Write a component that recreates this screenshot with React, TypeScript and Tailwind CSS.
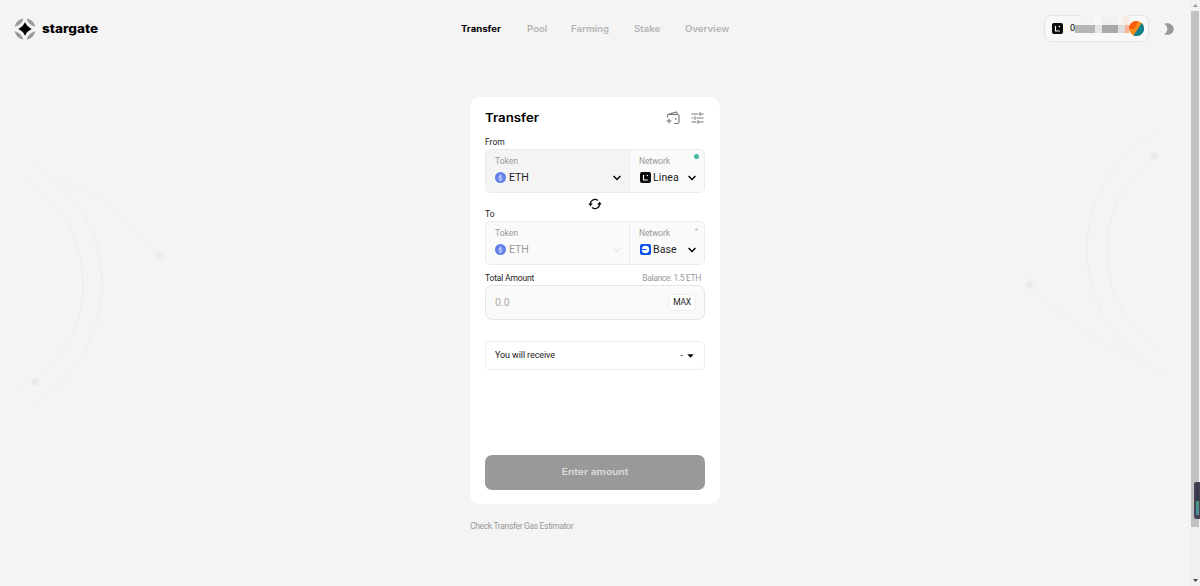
import React from 'react';
import { clsx } from 'clsx';

const links = [
  { label: 'Transfer', style: 'w-[41px] text-black font-bold' },
  { label: 'Pool', style: 'w-[19px] text-[#b3b3b3] font-semibold' },
  { label: 'Farming', style: 'w-[38px] text-[#b3b3b3] font-semibold' },
  { label: 'Stake', style: 'w-[26px] text-[#b3b3b3] font-semibold' },
  { label: 'Overview', style: 'w-[43px] text-[#b3b3b3] font-semibold' },
];

function Logo() {
  return (
    <svg className="h-[22px] w-[22px]" viewBox="0 0 22 22">
      <g fill="#999">
        <path d="M.7 8.800C1.600 4.400 4.800 1.300 9.300.5 8.300 4.800 5 7.400.7 8.800Z" />
        <path d="M21.300 8.800C20.400 4.400 17.200 1.300 12.700.5c1 4.300 4.300 6.900 8.600 8.300Z" />
        <path d="M.7 13.200c.9 4.400 4.100 7.500 8.600 8.300-1-4.300-4.300-6.900-8.600-8.300Z" />
        <path d="M21.300 13.200c-.9 4.400-4.100 7.500-8.600 8.300 1-4.300 4.300-6.900 8.600-8.300Z" />
      </g>
      <path d="M11 5.500c1.200 2.500 3 4.300 5.500 5.500-2.500 1.200-4.300 3-5.500 5.500-1.200-2.500-3-4.300-5.500-5.500 2.500-1.200 4.300-3 5.500-5.500Z" fill="#000" stroke="#000" strokeWidth="1.2" />
    </svg>
  );
}

function LineaIcon({ className }: { className?: string }) {
  return (
    <svg className={clsx('shrink-0', className)} viewBox="0 0 11 11">
      <rect width="11" height="11" rx="2" fill="#0b0b0b" />
      <path d="M3.500 3v5H7.800" fill="none" stroke="#fff" strokeWidth="1.1" />
      <circle cx="7.300" cy="3.500" r=".8" fill="#fff" />
    </svg>
  );
}

function BaseIcon() {
  return (
    <svg className="h-[11px] w-[11px] shrink-0" viewBox="0 0 11 11">
      <rect width="11" height="11" rx="2" fill="#0b52f0" />
      <circle cx="5.500" cy="5.500" r="3.700" fill="#fff" />
      <path d="M1.500 5.500H6.600" stroke="#0b52f0" strokeWidth="1" />
    </svg>
  );
}

function EthIcon() {
  return (
    <svg className="h-[11px] w-[11px] shrink-0" viewBox="0 0 11 11">
      <circle cx="5.500" cy="5.500" r="5.500" fill="#627eea" />
      <path d="M5.500 1.700 3.200 5.600 5.500 7l2.300-1.400Z" fill="#c5d0fa" />
      <path d="M5.500 1.700V7l2.300-1.400Z" fill="#93a6f3" />
      <path d="m3.200 6.200 2.300 3.200 2.300-3.200-2.300 1.300Z" fill="#dbe2ff" />
    </svg>
  );
}

function Chevron({ className }: { className?: string }) {
  return (
    <svg className={clsx('h-[6px] w-[8px] shrink-0', className)} viewBox="0 0 8 6" fill="none" stroke="currentColor">
      <path d="M.6 1.100 4 4.500l3.400-3.400" strokeWidth="1.4" />
    </svg>
  );
}

function WalletIcon() {
  return (
    <svg className="h-[14px] w-[14px]" viewBox="0 0 14 14" fill="none" stroke="#777" strokeWidth="1.1">
      <path d="M1.500 6.500V4.600c0-.7.4-1.100 1-1.100h9c.9 0 1.500.5 1.500 1.400v6.200c0 .8-.6 1.400-1.500 1.400H8" />
      <path d="M2 3.500 9.800 1.100c.7-.2 1.200.1 1.200.8v1.500M.5 10h5M3 7.500v5" />
      <path d="M9.700 7.300v1.400" strokeWidth="1.4" />
    </svg>
  );
}

function SlidersIcon() {
  return (
    <svg className="h-[12px] w-[13px]" viewBox="0 0 13 12" fill="none" stroke="#777" strokeWidth="1.1">
      <path d="M.5 2h7M9 2h3.500M9 .2v3.600M.5 6h2M5.500 6h7M4 4.200v3.600M.5 10h5M7 10h5.500M7 8.200v3.600" />
    </svg>
  );
}

function SwapIcon() {
  return (
    <svg className="h-[12px] w-[14px]" viewBox="0 0 14 12">
      <g fill="none" stroke="#000" strokeWidth="1.3">
        <path d="M2.500 6.500A4.500 4.500 0 0 1 9.800 2.400" />
        <path d="M11.500 5.500A4.500 4.500 0 0 1 4.200 9.600" />
      </g>
      <path d="M.3 5.600h4.500L2.400 8.200ZM13.700 6.400H9.200l2.400-2.600Z" />
    </svg>
  );
}

function Backdrop() {
  return (
    <svg className="pointer-events-none absolute inset-0 h-full w-full" viewBox="0 0 1190 586" fill="none">
      <defs>
        <linearGradient id="fade-left" x1="0" x2="1">
          <stop offset="0" stopColor="#ececec" stopOpacity="0" />
          <stop offset=".7" stopColor="#ececec" />
        </linearGradient>
        <linearGradient id="fade-right" x1="1" x2="0">
          <stop offset="0" stopColor="#ececec" stopOpacity="0" />
          <stop offset=".7" stopColor="#ececec" />
        </linearGradient>
      </defs>
      <g stroke="url(#fade-left)">
        <path d="M16 176C57 193 83 237 83 285s-26 90-83 110" />
        <path d="M28 162C74 184 102 232 102 285s-34 115-102 133" />
        <path d="M30 170C84 180 122 211 159 254" />
      </g>
      <g stroke="url(#fade-right)">
        <path d="M1182 147c-44 8-75 54-75 104s30 98 80 112" />
        <path d="M1180 123c-56 17-93 69-93 128s38 116 103 131" />
        <path d="M1030 285c38 38 88 75 150 92" />
      </g>
      <g fill="#eaeaea">
        <circle cx="159.500" cy="254.500" r="7" fill="#f2f2f2" />
        <circle cx="159.500" cy="254.500" r="3" />
        <circle cx="35" cy="382" r="3.500" />
        <circle cx="1154" cy="156" r="3.700" />
        <circle cx="1029.500" cy="284.500" r="7" fill="#f2f2f2" />
        <circle cx="1029.500" cy="284.500" r="3.500" />
      </g>
    </svg>
  );
}

function Header() {
  return (
    <header className="relative grid h-[57px] grid-cols-[1fr_auto_1fr] items-center pr-[16px] pl-[14px]">
      <div className="flex items-center gap-[6px]">
        <Logo />
        <span className="origin-left scale-x-[1.13] font-['Inter'] text-[12px] font-extrabold text-black">stargate</span>
      </div>

      <nav className="flex gap-[25px] font-['Inter'] text-[8.500px] leading-3">
        {links.map((link) => (
          <a key={link.label} className={clsx('origin-left scale-x-[1.13] whitespace-nowrap', link.style)}>
            {link.label}
          </a>
        ))}
      </nav>

      <div className="flex items-center justify-end gap-[15px]">
        <div className="relative flex h-[27px] w-[105px] items-center rounded-[7px] border border-[#e3e3e3] bg-[#f8f8f8] pr-[4px] pl-[7px]">
          <LineaIcon className="h-[11px] w-[11px]" />
          <span className="ml-[7px] text-[9px] text-black">0</span>
          {/* masked address, runs over the pill's border */}
          <div className="absolute -top-[3px] left-[30px] w-[54px]">
            <div className="ml-[5px] flex h-[4px] bg-[#f5f5f5]" />
            <div className="ml-[5px] flex h-[8px]">
              <div className="w-[15px] bg-[#f3f3f3]" />
              <div className="w-[8px] bg-[#f8f8f8]" />
              <div className="w-[15px] bg-[#efefef]" />
              <div className="w-[7px] bg-[#f5f5f5]" />
              <div className="w-[6px] bg-[#fbe9e2]" />
            </div>
            <div className="flex h-[8px]">
              <div className="w-[20px] bg-[#b5b5b5]" />
              <div className="w-[7px] bg-[#e6e6e6]" />
              <div className="w-[16px] bg-[#a9a9a9]" />
              <div className="w-[7px] bg-[#dedede]" />
              <div className="w-[4px] bg-[#fbb595]" />
            </div>
          </div>
          <svg className="relative ml-auto h-[15px] w-[15px] shrink-0" viewBox="0 0 15 15">
            <circle cx="7.500" cy="7.500" r="7.500" fill="#f68d1c" />
            <path d="M0 7.500A7.500 7.500 0 0 1 7.500 0L9 1 5 8Z" fill="#fa5a0a" />
            <path d="M12.700 2.100A7.500 7.500 0 0 1 4.500 14.400Z" fill="#10818f" />
          </svg>
        </div>
        <svg className="h-[12px] w-[10px]" viewBox="0 0 10 12">
          <path d="M0 .8C5-1.200 9.700 1.600 9.700 6S5 13.200 0 11.200C4.400 9 4.400 3 0 .8Z" fill="#999" />
        </svg>
      </div>
    </header>
  );
}

type AssetRowProps = {
  network: string;
  icon: React.ReactNode;
  disabled?: boolean;
};

function AssetRow({ network, icon, disabled }: AssetRowProps) {
  return (
    <div className="flex h-[44px] overflow-hidden rounded-[5px] border border-[#ececec] bg-[#fafafa]">
      <div className={clsx('w-[144px] border-r border-[#ececec] pt-[6px] pr-[8px] pl-[9px]', !disabled && 'bg-[#f4f4f4]')}>
        <div className="text-[8.500px] leading-[10px] text-[#999]">Token</div>
        <div className={clsx('mt-[5px] flex h-[13px] items-center', disabled ? 'text-[#999]' : 'text-[#222]')}>
          <EthIcon />
          <span className="ml-[3px] flex-1 text-[10.500px] leading-[13px]">ETH</span>
          <Chevron className={disabled ? 'text-[#ececec]' : 'text-black'} />
        </div>
      </div>
      <div className="relative flex-1 pt-[6px] pr-[8px] pl-[9px]">
        <div className="text-[8.500px] leading-[10px] tracking-[-0.1px] text-[#999]">Network</div>
        <div className="mt-[5px] flex h-[13px] items-center pl-[1px] text-[#222]">
          {icon}
          <span className="ml-[2px] flex-1 text-[10.500px] leading-[13px] tracking-[0.1px]">{network}</span>
          <Chevron className="text-black" />
        </div>
        <span
          className={clsx(
            'absolute rounded-full',
            disabled ? 'top-[6px] right-[6px] h-[3px] w-[3px] bg-[#cfcfcf]' : 'top-[4px] right-[5px] h-[5px] w-[5px] bg-[#45b8a5]'
          )}
        />
      </div>
    </div>
  );
}

function TransferCard() {
  return (
    <section className="flex h-[407px] w-[250px] flex-col rounded-[10px] bg-white px-[15px] pt-[8px] pb-[14px]">
      <div className="flex h-[26px] items-center justify-between">
        <h1 className="mt-[2px] origin-left scale-x-[1.15] font-['Inter'] text-[11.500px] font-semibold text-black">
          Transfer
        </h1>
        <div className="flex items-center gap-[11px] pr-[1px]">
          <WalletIcon />
          <SlidersIcon />
        </div>
      </div>

      <div className="flex h-[18px] items-end pb-[2px] text-[8.500px] leading-[10px] text-[#222]">From</div>
      <AssetRow network="Linea" icon={<LineaIcon className="h-[11px] w-[11px]" />} />

      <div className="grid h-[28px] grid-cols-[1fr_auto_1fr]">
        <span className="self-end pb-[2px] text-[8.500px] leading-[10px] text-[#222]">To</span>
        <div className="pt-[5px]">
          <SwapIcon />
        </div>
      </div>
      <AssetRow network="Base" icon={<BaseIcon />} disabled />

      <div className="flex h-[20px] items-end justify-between pr-[4px] pb-[2px] leading-[10px]">
        <span className="text-[8.500px] tracking-[-0.17px] text-[#222]">Total Amount</span>
        <span className="text-[8.500px] tracking-[-0.35px] text-[#999]">Balance: 1.5 ETH</span>
      </div>
      <div className="flex h-[35px] shrink-0 items-center justify-between rounded-[7px] border border-[#e6e6e6] bg-[#fafafa] pr-[8px] pl-[9px]">
        <span className="mt-[1px] text-[10.500px] text-[#aaa]">0.0</span>
        <button className="h-[17px] w-[28px] rounded-[5px] border border-[#eee] bg-white text-[8.500px] leading-none tracking-[-0.3px] text-[#222]">
          MAX
        </button>
      </div>

      <div className="mt-[21px] flex h-[29px] shrink-0 items-center rounded-[5px] border border-[#ededed] pr-[10px] pl-[9px] text-[9px] text-[#222]">
        <span className="flex-1 tracking-[-0.1px]">You will receive</span>
        <span>-</span>
        <svg className="ml-[4px] h-[4px] w-[7px]" viewBox="0 0 7 4">
          <path d="M.3.200h6.400L3.500 3.700Z" />
        </svg>
      </div>

      <button className="mt-auto flex h-[35px] shrink-0 items-center justify-center rounded-[7px] bg-[#999] pb-[2px] text-[#dcdcdc]">
        <span className="scale-x-[1.15] font-['Inter'] text-[9px] leading-3 font-semibold">Enter amount</span>
      </button>
    </section>
  );
}

function Scrollbar() {
  return (
    <div className="relative flex w-[10px] flex-col items-center justify-between bg-[#f1f1f1]">
      <svg className="mt-[4px] h-[3px] w-[5px]" viewBox="0 0 5 3">
        <path d="M0 3h5L2.500 0Z" fill="#999" />
      </svg>
      <div className="mt-[4px] h-[516px] w-[8px] bg-[#c1c1c1]" />
      <div className="flex-1" />
      <svg className="mb-[4px] h-[3px] w-[5px]" viewBox="0 0 5 3">
        <path d="M0 0h5L2.500 3Z" fill="#444" />
      </svg>
      <div className="absolute top-[482px] right-0 flex h-[37px] w-[6px] flex-col rounded-l-[2px] bg-[#454555] py-[2px] pl-[2px]">
        <div className="h-[17px] w-[3px] shrink-0 bg-[#383850]" />
        <div className="h-[14px] w-[3px] shrink-0 bg-linear-to-b from-[#4c9a7c] to-[#4c8a9c]" />
      </div>
    </div>
  );
}

export default function App() {
  return (
    <div className="flex h-[586px] w-[1200px] overflow-hidden bg-[#f4f4f4] font-['Roboto',sans-serif]">
      <div className="relative flex-1">
        <Backdrop />
        <Header />
        <main className="relative mx-auto mt-[40px] w-[250px]">
          <TransferCard />
          <p className="mt-[16px] text-[8.500px] leading-[12px] tracking-[-0.33px] text-[#999]">Check Transfer Gas Estimator</p>
        </main>
      </div>
      <Scrollbar />
    </div>
  );
}
